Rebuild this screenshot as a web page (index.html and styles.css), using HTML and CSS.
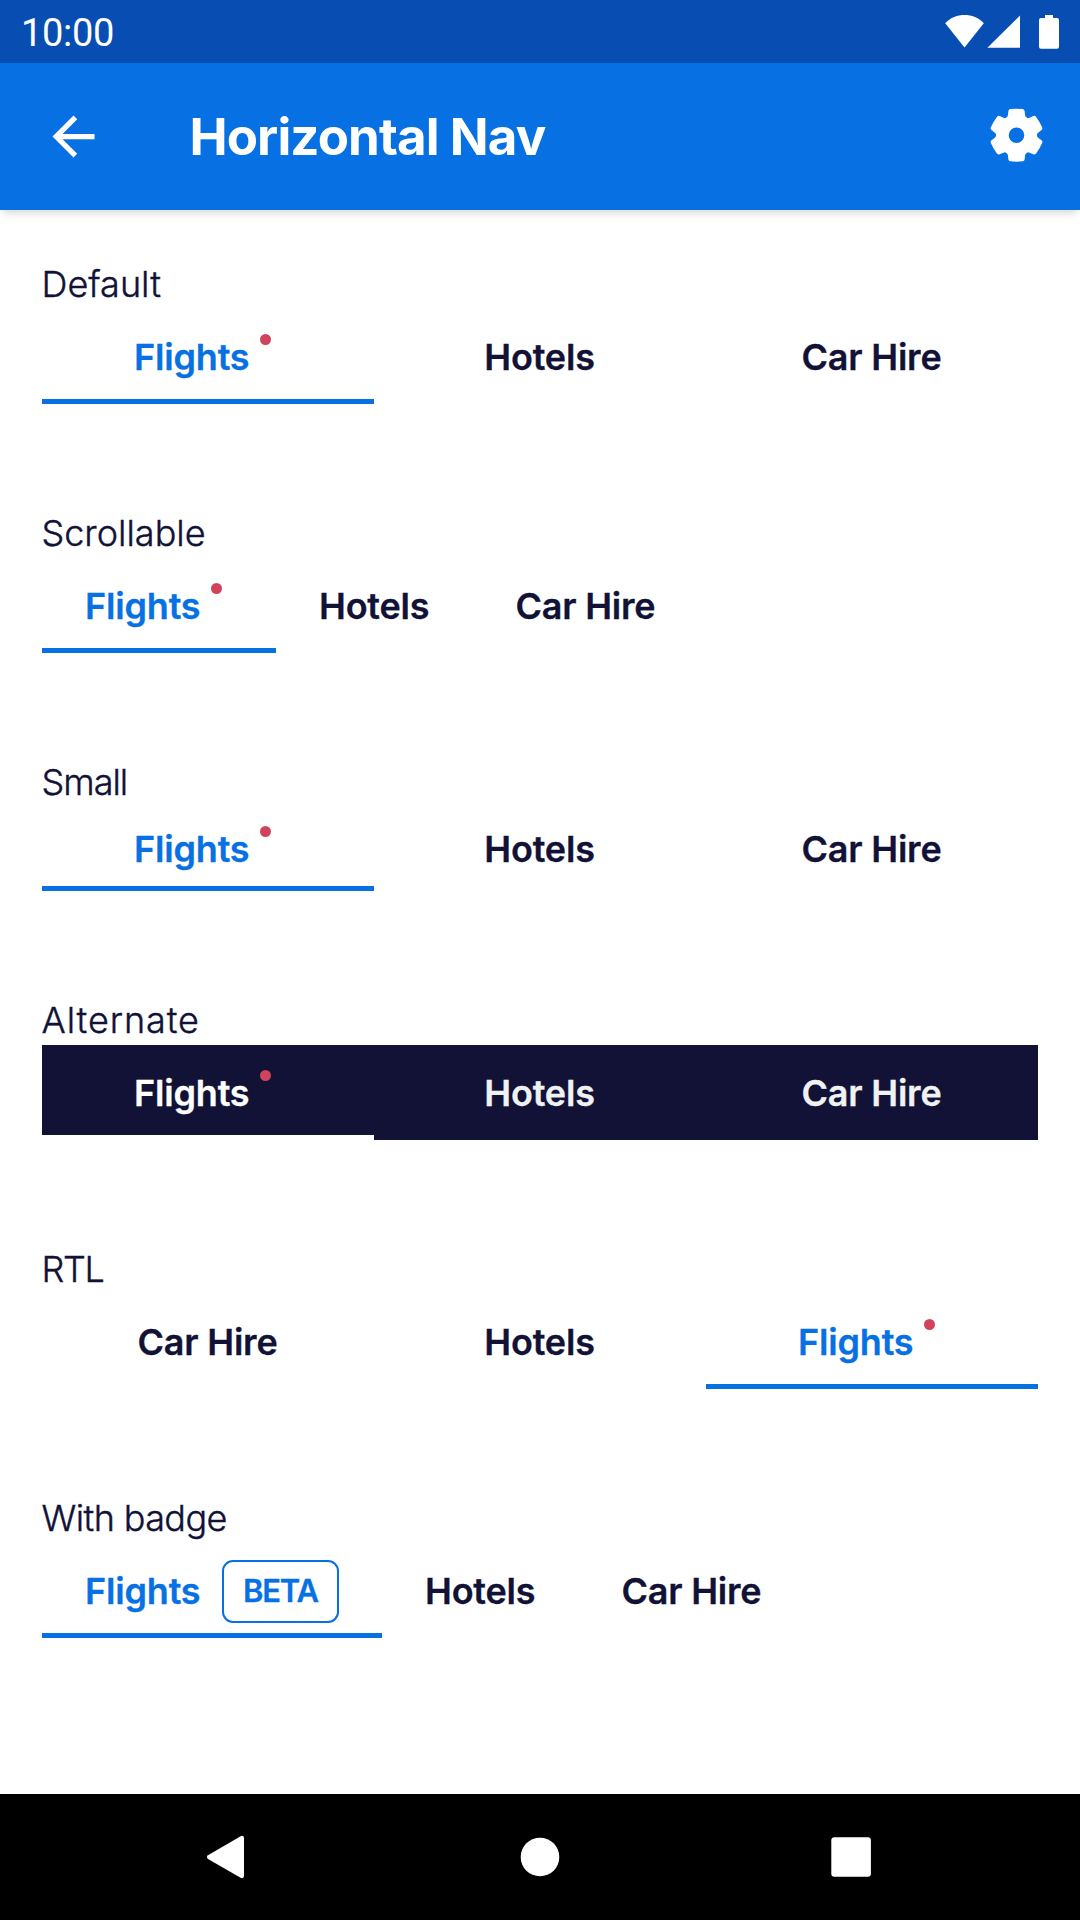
FILE: index.html
```html
<!DOCTYPE html>
<html lang="en">
<head>
<meta charset="utf-8">
<title>Horizontal Nav</title>
<link rel="stylesheet" href="styles.css">
</head>
<body>
<div class="screen">
  <div class="status-bar">
    <span class="clock">10:00</span>
    <svg class="status-icons" width="116" height="36" viewBox="0 0 116 36" fill="#fff">
      <path d="M0.2 9.2C5.5 3.5 12.5 1 19.5 1S33.5 3.5 38.8 9.2L19.5 33.6Z"/>
      <path d="M75 1.4V33.8H42.4Z"/>
      <path d="M100 1h8v3h4q2 0 2 2v26.800q0 2-2 2h-16q-2 0-2-2V6q0-2 2-2h4Z"/>
    </svg>
  </div>
  <header class="app-bar">
    <svg class="back" width="63" height="63" viewBox="0 0 24 24" fill="#fff"><path d="M20 11H7.83l5.59-5.59L12 4l-8 8 8 8 1.41-1.41L7.83 13H20v-2z"/></svg>
    <h1 class="title">Horizontal Nav</h1>
    <svg class="settings" width="54" height="54" viewBox="-27.500 -27.200 54 54" fill="#fff">
      <defs><path id="tooth" d="M-10.6-17.200Q-8.800-18.200-8.600-20L-8.100-24.200Q-7.900-25.800-6.300-26.100Q0-26.900 6.300-26.100Q7.900-25.800 8.100-24.200L8.600-20Q8.800-18.200 10.600-17.200L8-13H-8Z"/></defs>
      <circle r="14" fill="none" stroke="#fff" stroke-width="12.400"/>
      <use href="#tooth"/>
      <use href="#tooth" transform="rotate(60)"/>
      <use href="#tooth" transform="rotate(120)"/>
      <use href="#tooth" transform="rotate(180)"/>
      <use href="#tooth" transform="rotate(240)"/>
      <use href="#tooth" transform="rotate(300)"/>
    </svg>
  </header>

  <main class="content">
    <section class="example">
      <h2 class="label">Default</h2>
      <nav class="tabs">
        <a class="tab active">Flights<i class="dot"></i></a>
        <a class="tab">Hotels</a>
        <a class="tab">Car Hire</a>
      </nav>
    </section>
    <section class="example">
      <h2 class="label">Scrollable</h2>
      <nav class="tabs scrollable">
        <a class="tab active">Flights<i class="dot"></i></a>
        <a class="tab">Hotels</a>
        <a class="tab">Car Hire</a>
      </nav>
    </section>
    <section class="example">
      <h2 class="label label-small">Small</h2>
      <nav class="tabs small">
        <a class="tab active">Flights<i class="dot"></i></a>
        <a class="tab">Hotels</a>
        <a class="tab">Car Hire</a>
      </nav>
    </section>
    <section class="example">
      <h2 class="label label-alternate">Alternate</h2>
      <nav class="tabs alternate">
        <a class="tab active">Flights<i class="dot"></i></a>
        <a class="tab">Hotels</a>
        <a class="tab">Car Hire</a>
      </nav>
    </section>
    <section class="example">
      <h2 class="label label-rtl">RTL</h2>
      <nav class="tabs rtl">
        <a class="tab active">Flights<i class="dot"></i></a>
        <a class="tab">Hotels</a>
        <a class="tab">Car Hire</a>
      </nav>
    </section>
    <section class="example">
      <h2 class="label label-badge">With badge</h2>
      <nav class="tabs scrollable">
        <a class="tab active">Flights<span class="badge">BETA</span></a>
        <a class="tab">Hotels</a>
        <a class="tab">Car Hire</a>
      </nav>
    </section>
  </main>

  <footer class="system-nav">
    <svg width="42" height="44" viewBox="0 0 42 44" fill="#fff"><path d="M0 20.200 32.600 1.200Q35.800 0 36 3V41Q35.800 44 32.600 42.800L0 24Q-2.200 22 0 20.200Z"/></svg>
    <svg width="42" height="44" viewBox="0 0 42 44" fill="#fff"><circle cx="21" cy="22" r="19.300"/></svg>
    <svg width="42" height="44" viewBox="0 0 42 44" fill="#fff"><rect x="1.300" y="2.200" width="39.600" height="39.600" rx="3"/></svg>
  </footer>
</div>
</body>
</html>
```
FILE: styles.css
```css
* {
  box-sizing: border-box;
}

body {
  margin: 0;
  background: #fff;
  color: #111236;
  font-family: Inter, "Liberation Sans", sans-serif;
}

.screen {
  display: flex;
  flex-direction: column;
  height: 1920px;
}

.status-bar {
  display: flex;
  justify-content: space-between;
  align-items: center;
  height: 63px;
  padding: 0 19px 0 21px;
  background: #084eb2;
  color: #fff;
}

.clock {
  padding-top: 3px;
  font: 400 38px/44px Roboto, sans-serif;
  letter-spacing: -0.3px;
}

.app-bar {
  display: flex;
  align-items: center;
  height: 147px;
  padding: 0 37px 0 42px;
  background: #0770e3;
  color: #fff;
  box-shadow: 0 6px 8px -3px rgba(0, 0, 0, 0.16);
}

.title {
  flex: 1;
  margin: 0 0 0 84.5px;
  padding-top: 1px;
  font-size: 51px;
  font-weight: 700;
  line-height: 64px;
  letter-spacing: -0.88px;
}

.settings {
  margin-bottom: 3px;
}

.content {
  flex: 1;
  display: flex;
  flex-direction: column;
  gap: 106px;
  padding: 51px 42px 0;
}

.label {
  height: 48px;
  margin: 0;
  font-size: 36px;
  font-weight: 300;
  line-height: 46px;
  text-indent: -0.5px;
  -webkit-text-stroke: 0.4px currentColor;
}

.label-small { letter-spacing: -1px; }
.label-alternate { letter-spacing: 0.9px; }
.label-rtl { letter-spacing: -1.3px; }
.label-badge { letter-spacing: -0.6px; }

.tabs {
  display: flex;
  height: 95px;
  font-size: 36px;
  font-weight: 600;
  letter-spacing: -0.2px;
  -webkit-text-stroke: 0.3px currentColor;
}

.tab {
  flex: none;
  width: 332px;
  display: flex;
  justify-content: center;
  align-items: center;
  padding: 1px 1px 0 0;
}

.tab.active {
  padding-right: 0;
  color: #0770e3;
  box-shadow: inset 0 -5px #0770e3;
}

.small {
  height: 84px;
}

.small .tab {
  padding-top: 0;
}

.scrollable .tab {
  width: auto;
  padding: 1px 43px 0;
}

.scrollable .tab:has(.dot) {
  width: 234px;
}

.scrollable .tab:has(.badge) {
  width: 340px;
}

.rtl {
  flex-direction: row-reverse;
}

.alternate {
  background: #111236;
  color: #eff1f2;
}

.alternate .tab.active {
  color: #fff;
  box-shadow: inset 0 -5px #fff;
}

.dot {
  flex: none;
  width: 11px;
  height: 11px;
  margin: 0 11px 35px 10.5px;
  border-radius: 50%;
  background: #d1435b;
}

.badge {
  flex: none;
  width: 117px;
  height: 63px;
  margin: 1px 0 0 21.5px;
  border: 2px solid #0770e3;
  border-radius: 11px;
  font-size: 31px;
  line-height: 58px;
  letter-spacing: -1.2px;
  text-align: center;
}

.system-nav {
  display: flex;
  justify-content: center;
  align-items: center;
  gap: 269px;
  height: 126px;
  background: #000;
}

.system-nav svg {
  overflow: visible;
}
```
